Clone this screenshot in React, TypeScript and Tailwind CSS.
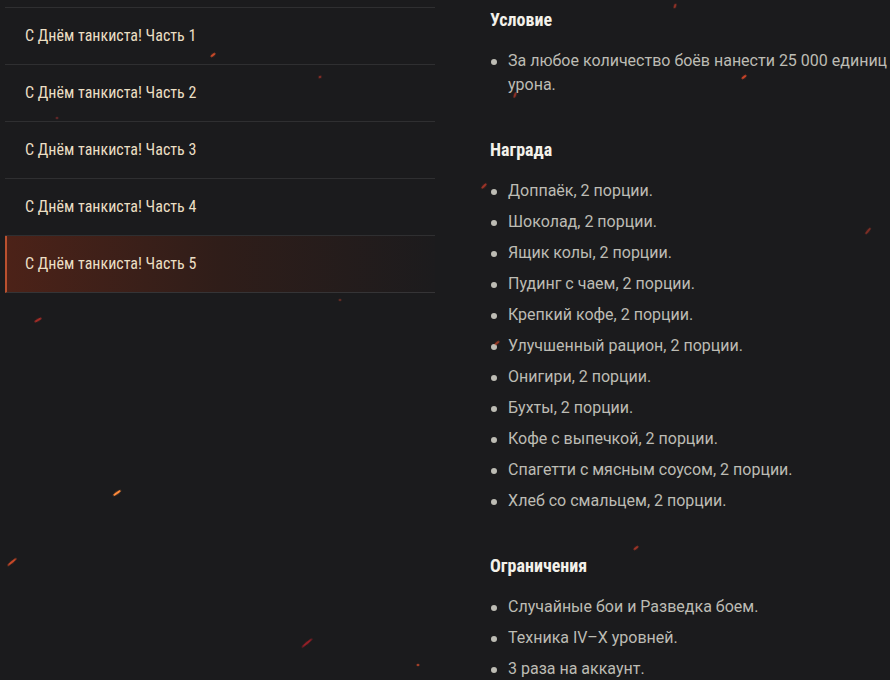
import React from 'react';

const parts = [1, 2, 3, 4, 5];

const rewards = [
  'Доппаёк, 2 порции.',
  'Шоколад, 2 порции.',
  'Ящик колы, 2 порции.',
  'Пудинг с чаем, 2 порции.',
  'Крепкий кофе, 2 порции.',
  'Улучшенный рацион, 2 порции.',
  'Онигири, 2 порции.',
  'Бухты, 2 порции.',
  'Кофе с выпечкой, 2 порции.',
  'Спагетти с мясным соусом, 2 порции.',
  'Хлеб со смальцем, 2 порции.',
];

const limits = ['Случайные бои и Разведка боем.', 'Техника IV–X уровней.', '3 раза на аккаунт.'];

// x, y, length, angle, colour, opacity
const sparks: [number, number, number, number, string, number][] = [
  [213, 55, 6, -40, '#e0502a', 0.9],
  [320, 77, 3, -30, '#c0392b', 0.7],
  [117, 493, 9, -35, '#ff8a3a', 1],
  [12, 562, 12, -40, '#e0502a', 0.9],
  [307, 643, 14, -40, '#c0202a', 0.75],
  [38, 320, 8, -30, '#d0302a', 0.75],
  [418, 665, 3, 0, '#c04a2a', 0.8],
  [57, 118, 3, 0, '#a03030', 0.5],
  [744, 77, 6, -40, '#e04a2a', 0.9],
  [675, 6, 5, -70, '#c03a2a', 0.7],
  [515, 95, 6, -70, '#c03a2a', 0.7],
  [484, 186, 7, -45, '#c03a2a', 0.8],
  [497, 343, 6, -40, '#d04a2a', 0.7],
  [868, 231, 8, -50, '#c03a2a', 0.6],
  [636, 548, 6, -40, '#c03a2a', 0.8],
  [340, 300, 3, 0, '#a03a2a', 0.5],
];

function Sparks() {
  return (
    <svg className="pointer-events-none absolute inset-0" width="890" height="680">
      <defs>
        <filter id="glow" x="-50%" y="-50%" width="200%" height="200%">
          <feGaussianBlur stdDeviation="0.7" />
        </filter>
      </defs>
      {sparks.map(([x, y, l, a, c, o], i) => (
        <ellipse
          key={i}
          cx={x}
          cy={y}
          rx={l / 2}
          ry={1.2}
          fill={c}
          opacity={o}
          filter="url(#glow)"
          transform={`rotate(${a} ${x} ${y})`}
        />
      ))}
    </svg>
  );
}

function Section({ title, items, first }: { title: string; items: string[]; first?: boolean }) {
  return (
    <div className={first ? '' : 'mt-[41px]'}>
      <h3 className="font-['Roboto_Condensed',Roboto,sans-serif] [font-stretch:condensed] text-[18px] leading-[24px] font-bold text-[#f3f1ea]">
        {title}
      </h3>
      <ul className="mt-[17px] space-y-[7px]">
        {items.map((t) => (
          <li key={t} className="flex text-[16px] leading-[24px] text-[#bdbcb4]">
            <span className="mt-[10px] mr-[11px] ml-[1px] h-[6px] w-[6px] shrink-0 rounded-full bg-[#bdbcb4]" />
            <span>{t}</span>
          </li>
        ))}
      </ul>
    </div>
  );
}

export default function App() {
  return (
    <div className="relative h-[680px] w-[890px] overflow-hidden bg-[#1b1b1d] font-[Roboto,'Noto_Sans',sans-serif]">
      <div className="flex">
        <nav className="ml-[5px] mt-[7px] w-[430px] border-t border-[#2f2f31]">
          {parts.map((n) => {
            const active = n === 5;
            return (
              <div
                key={n}
                className={
                  active
                    ? 'flex h-[57px] items-center border-b border-l-2 border-b-[#353436] border-l-[#b9502f] bg-gradient-to-r from-[#4c2218] via-[#2f1d19] via-50% to-[#1c1b1d] pl-[18px]'
                    : 'flex h-[57px] items-center border-b border-[#2f2f31] pl-[20px]'
                }
              >
                <span className="font-['Roboto_Condensed',Roboto,sans-serif] [font-stretch:condensed] text-[16px] leading-none text-[#ebdfc4]">
                  С Днём танкиста! Часть {n}
                </span>
              </div>
            );
          })}
        </nav>
        <main className="ml-[55px] mt-[8px] flex-1 pr-[2px]">
          <Section first title="Условие" items={['За любое количество боёв нанести 25 000 единиц урона.']} />
          <Section title="Награда" items={rewards} />
          <Section title="Ограничения" items={limits} />
        </main>
      </div>
      <Sparks />
    </div>
  );
}
